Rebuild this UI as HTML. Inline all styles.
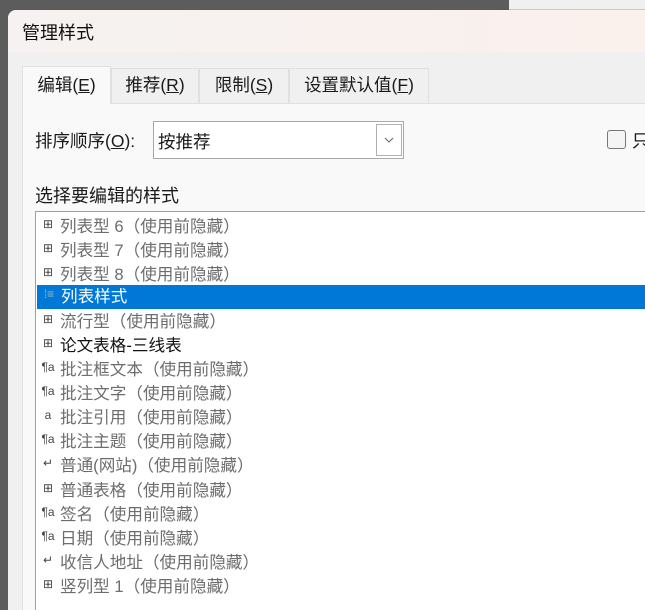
<!DOCTYPE html>
<html><head><meta charset="utf-8"><style>
*{margin:0;padding:0;box-sizing:border-box}
body{width:645px;height:591px;overflow:hidden;background:#5c5c5c;position:relative;font-family:"Liberation Sans","Noto Sans CJK SC",sans-serif;font-size:17.5px;color:#1a1a1a}
.abs{position:absolute}
#right{left:509px;top:0;width:136px;height:10px;background:#f0f0f0;border-bottom:1px solid #c8c8c8}
#dlg{left:8px;top:10px;width:660px;height:600px;background:#f0f0f0;border-radius:8px 0 0 0;overflow:hidden}
#title{left:0;top:0;width:660px;height:42px;background:linear-gradient(90deg,#f5f2f1,#fbf0ec);}
#title span{position:absolute;left:14px;top:9px;font-size:18px;color:#111}
.tab{top:58px;height:35px;border:1px solid #e0e0e0;border-bottom:none;background:#f0f0f0;line-height:33px;text-align:center;font-size:17.5px}
#panel{left:14px;top:93px;width:650px;height:510px;background:#f9f9f9;border-top:1px solid #e0e0e0;border-left:1px solid #e0e0e0}
#list{left:27px;top:201px;width:640px;height:400px;background:#fff;border:1px solid #a0a0a0}
.row{position:absolute;left:0;height:24px;width:620px;line-height:24px;color:#6d6d6d;font-size:16.6px;white-space:nowrap}
.row i{display:inline-block;width:24px;font-style:normal;font-size:12px;text-align:center;vertical-align:top;line-height:18px;color:#444}
.sel{background:#0078d7;color:#fff;left:1px}
u{text-decoration:underline}
</style></head><body>
<div id="right" class="abs"></div>
<div id="dlg" class="abs">
 <div id="title" class="abs"><span>管理样式</span></div>
 <div id="panel" class="abs"></div>
 <div class="abs tab" style="left:14px;top:56px;width:89px;height:38px;background:#f9f9f9;line-height:36px">编辑(<u>E</u>)</div>
 <div class="abs tab" style="left:103px;width:88px">推荐(<u>R</u>)</div>
 <div class="abs tab" style="left:191px;width:90px">限制(<u>S</u>)</div>
 <div class="abs tab" style="left:281px;width:140px">设置默认值(<u>F</u>)</div>
 <div class="abs" style="left:27px;top:118px">排序顺序(<u>O</u>):</div>
 <div class="abs" style="left:145px;top:111px;width:251px;height:38px;background:#fff;border:1px solid #a8a8a8">
  <span class="abs" style="left:4px;top:7px">按推荐</span>
  <div class="abs" style="left:222px;top:2px;width:26px;height:32px;border:1px solid #b0b0b0;background:#fff">
   <svg width="24" height="30" style="position:absolute;left:0;top:0"><path d="M8 13 L12 17 L16 13" stroke="#666" fill="none" stroke-width="1"/></svg>
  </div>
 </div>
 <div class="abs" style="left:599px;top:120px;width:19px;height:19px;border:1px solid #777;border-radius:3px;background:#f4f4f4"></div>
 <div class="abs" style="left:624px;top:118px">只</div>
 <div class="abs" style="left:27px;top:172px;font-size:18px">选择要编辑的样式</div>
 <div id="list" class="abs">
  <div class="row" style="top:3px"><i>⊞</i>列表型 6（使用前隐藏）</div>
  <div class="row" style="top:27px"><i>⊞</i>列表型 7（使用前隐藏）</div>
  <div class="row" style="top:51px"><i>⊞</i>列表型 8（使用前隐藏）</div>
  <div class="row sel" style="top:73px;width:640px"><i style="color:#9bc">⁞≡</i>列表样式</div>
  <div class="row" style="top:98px"><i>⊞</i>流行型（使用前隐藏）</div>
  <div class="row" style="top:122px;color:#111"><i>⊞</i>论文表格-三线表</div>
  <div class="row" style="top:146px"><i>¶a</i>批注框文本（使用前隐藏）</div>
  <div class="row" style="top:170px"><i>¶a</i>批注文字（使用前隐藏）</div>
  <div class="row" style="top:194px"><i>a</i>批注引用（使用前隐藏）</div>
  <div class="row" style="top:218px"><i>¶a</i>批注主题（使用前隐藏）</div>
  <div class="row" style="top:242px"><i>↵</i>普通(网站)（使用前隐藏）</div>
  <div class="row" style="top:267px"><i>⊞</i>普通表格（使用前隐藏）</div>
  <div class="row" style="top:291px"><i>¶a</i>签名（使用前隐藏）</div>
  <div class="row" style="top:315px"><i>¶a</i>日期（使用前隐藏）</div>
  <div class="row" style="top:339px"><i>↵</i>收信人地址（使用前隐藏）</div>
  <div class="row" style="top:363px"><i>⊞</i>竖列型 1（使用前隐藏）</div>
 </div>
</div>
</body></html>
